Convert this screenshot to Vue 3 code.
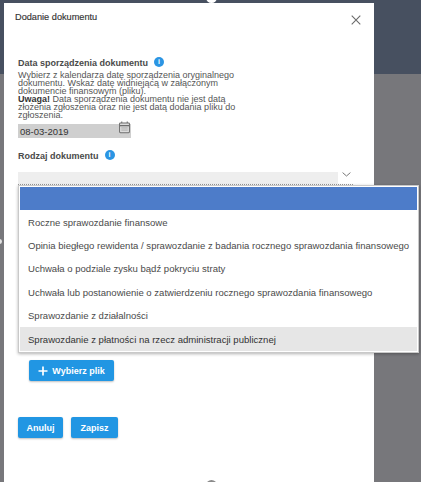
<template>
  <div class="page">
    <div class="backdrop">
      <div class="backdrop-top"></div>
      <div class="backdrop-bottom"></div>
    </div>
    <span class="handle handle-top"></span>
    <span class="handle handle-left"></span>
    <div class="modal">
      <div class="modal-header">
        <h2>Dodanie dokumentu</h2>
        <svg class="close" width="10" height="10" viewBox="0 0 10 10">
          <path d="M.7.7l8.6 8.6M9.3.7L.7 9.3" stroke="#6b6b6b" stroke-width="1.1" fill="none" />
        </svg>
      </div>

      <div class="label-row first">
        <span class="label">Data sporządzenia dokumentu</span>
        <span class="info">i</span>
      </div>
      <p class="hint">
        Wybierz z kalendarza datę sporządzenia oryginalnego<br />
        dokumentu. Wskaż datę widniejącą w załączonym<br />
        dokumencie finansowym (pliku).<br />
        <b>Uwaga!</b> Data sporządzenia dokumentu nie jest datą<br />
        złożenia zgłoszenia oraz nie jest datą dodania pliku do<br />
        zgłoszenia.
      </p>
      <div class="date-field">
        <span>08-03-2019</span>
        <svg class="calendar" width="11" height="13" viewBox="0 0 12 14">
          <path d="M3 .5v2.5M9 .5v2.5" stroke="#6f6f6f" stroke-width="1.2" />
          <rect x=".6" y="2" width="10.8" height="10.6" rx="1" fill="#dcdcdc" stroke="#6f6f6f" stroke-width="1.1" />
          <path d="M1 5h10" stroke="#6f6f6f" stroke-width="1.4" />
          <path d="M2.5 7.5h7M2.5 9.8h7" stroke="#a5a5a5" stroke-width="1" />
        </svg>
      </div>

      <div class="label-row second">
        <span class="label">Rodzaj dokumentu</span>
        <span class="info">i</span>
      </div>
      <div class="select-row">
        <div class="select-box"></div>
        <svg class="chevron" width="9" height="5" viewBox="0 0 9 5">
          <path d="M.6.6l3.9 3.4L8.4.6" stroke="#777" stroke-width="1" fill="none" />
        </svg>
      </div>

      <button class="btn btn-file">
        <svg width="10" height="10" viewBox="0 0 10 10">
          <path d="M5 .5v9M.5 5h9" stroke="#fff" stroke-width="1.7" />
        </svg>
        Wybierz plik
      </button>

      <div class="actions">
        <button class="btn">Anuluj</button>
        <button class="btn">Zapisz</button>
      </div>
    </div>
    <span class="handle handle-bottom"></span>

    <ul class="dropdown">
      <li class="selected"></li>
      <li
        v-for="(item, index) in options"
        :key="index"
        :class="{ hovered: index === options.length - 1 }"
      >
        {{ item }}
      </li>
    </ul>
  </div>
</template>

<script setup>
const options = [
  "Roczne sprawozdanie finansowe",
  "Opinia biegłego rewidenta / sprawozdanie z badania rocznego sprawozdania finansowego",
  "Uchwała o podziale zysku bądź pokryciu straty",
  "Uchwała lub postanowienie o zatwierdzeniu rocznego sprawozdania finansowego",
  "Sprawozdanie z działalności",
  "Sprawozdanie z płatności na rzecz administracji publicznej",
];
</script>

<style>
html,
body {
  margin: 0;
  overflow: hidden;
}
</style>

<style scoped>
.page {
  position: relative;
  width: 421px;
  height: 482px;
  overflow: hidden;
  font-family: "Liberation Sans", Arial, sans-serif;
  color: #333;
}

.backdrop {
  position: absolute;
  inset: 0;
  display: flex;
  flex-direction: column;
}

.backdrop-top {
  height: 74px;
  background: #475060;
}

.backdrop-bottom {
  flex: 1;
  background: #77777b;
}

.handle {
  position: absolute;
  left: 206px;
  width: 11px;
  height: 11px;
  border-radius: 50%;
}

.handle-top {
  top: -8px;
  background: #fff;
}

.handle-left {
  left: -3px;
  top: 239px;
  width: 5px;
  height: 5px;
  background: #e4e4e4;
}

.handle-bottom {
  top: 480px;
  background: #8a8a8a;
}

.modal {
  position: absolute;
  left: 4px;
  top: 3px;
  width: 370px;
  height: 479px;
  box-sizing: border-box;
  padding: 0 14px;
  background: #fff;
}

.modal-header {
  display: flex;
  justify-content: space-between;
  padding: 9px 0 0 0;
  margin: 0 -1px 0 -3px;
}

.modal-header h2 {
  margin: 0;
  font-size: 9.2px;
  line-height: 11px;
  font-weight: normal;
  color: #333;
  -webkit-text-stroke: 0.15px #333;
}

.close {
  margin-top: 3px;
}

.label-row {
  display: flex;
  align-items: center;
  gap: 6px;
  height: 12px;
}

.label-row.first {
  margin-top: 32px;
}

.label-row.second {
  margin-top: 12px;
}

.label {
  font-size: 9px;
  font-weight: bold;
  color: #4a4a4a;
}

.info {
  width: 10px;
  height: 10px;
  margin-top: -2px;
  border-radius: 50%;
  background: #2b95e3;
  color: #fff;
  font-size: 7px;
  font-weight: bold;
  line-height: 10px;
  text-align: center;
}

.hint {
  margin: 2px 0 0;
  font-size: 9px;
  line-height: 8px;
  color: #555;
  white-space: nowrap;
}

.hint b {
  color: #333;
}

.date-field {
  position: relative;
  display: flex;
  align-items: center;
  width: 113px;
  height: 14px;
  margin-top: 5px;
  box-sizing: border-box;
  padding-left: 2px;
  background: #cfcfcf;
  font-size: 9.5px;
}

.calendar {
  position: absolute;
  right: 1px;
  top: -3px;
}

.select-row {
  display: flex;
  align-items: flex-start;
  width: 335px;
  margin-top: 10px;
  border-bottom: 1px dotted #999;
}

.select-box {
  width: 320px;
  height: 12px;
  background: #eeeeee;
}

.chevron {
  margin: 0 0 0 4px;
}

.btn {
  display: inline-flex;
  align-items: center;
  justify-content: center;
  gap: 4px;
  height: 21px;
  box-sizing: border-box;
  padding: 0;
  border: none;
  border-radius: 2px;
  background: #2196e3;
  box-shadow: 0 1px 2px rgba(0, 0, 0, 0.25);
  color: #fff;
  font-family: inherit;
  font-size: 9px;
  font-weight: bold;
}

.btn-file {
  display: flex;
  width: 85px;
  margin: 175px 0 0 11px;
}

.actions {
  display: flex;
  gap: 8px;
  margin-top: 36px;
}

.actions .btn:first-child {
  width: 45px;
}

.actions .btn:last-child {
  width: 47px;
}

.dropdown {
  position: absolute;
  left: 18px;
  top: 185px;
  width: 401px;
  box-sizing: border-box;
  margin: 0;
  padding: 1px;
  list-style: none;
  background: #fff;
  border: 1px solid #c9c9c9;
  box-shadow: 0 1px 3px rgba(0, 0, 0, 0.3);
}

.dropdown li {
  display: flex;
  align-items: center;
  height: 23.4px;
  padding-left: 8px;
  font-size: 9.55px;
  color: #4a4a4a;
  white-space: nowrap;
}

.dropdown .selected {
  background: #4d7cc9;
}

.dropdown .hovered {
  background: #e6e6e6;
  color: #333;
}
</style>
